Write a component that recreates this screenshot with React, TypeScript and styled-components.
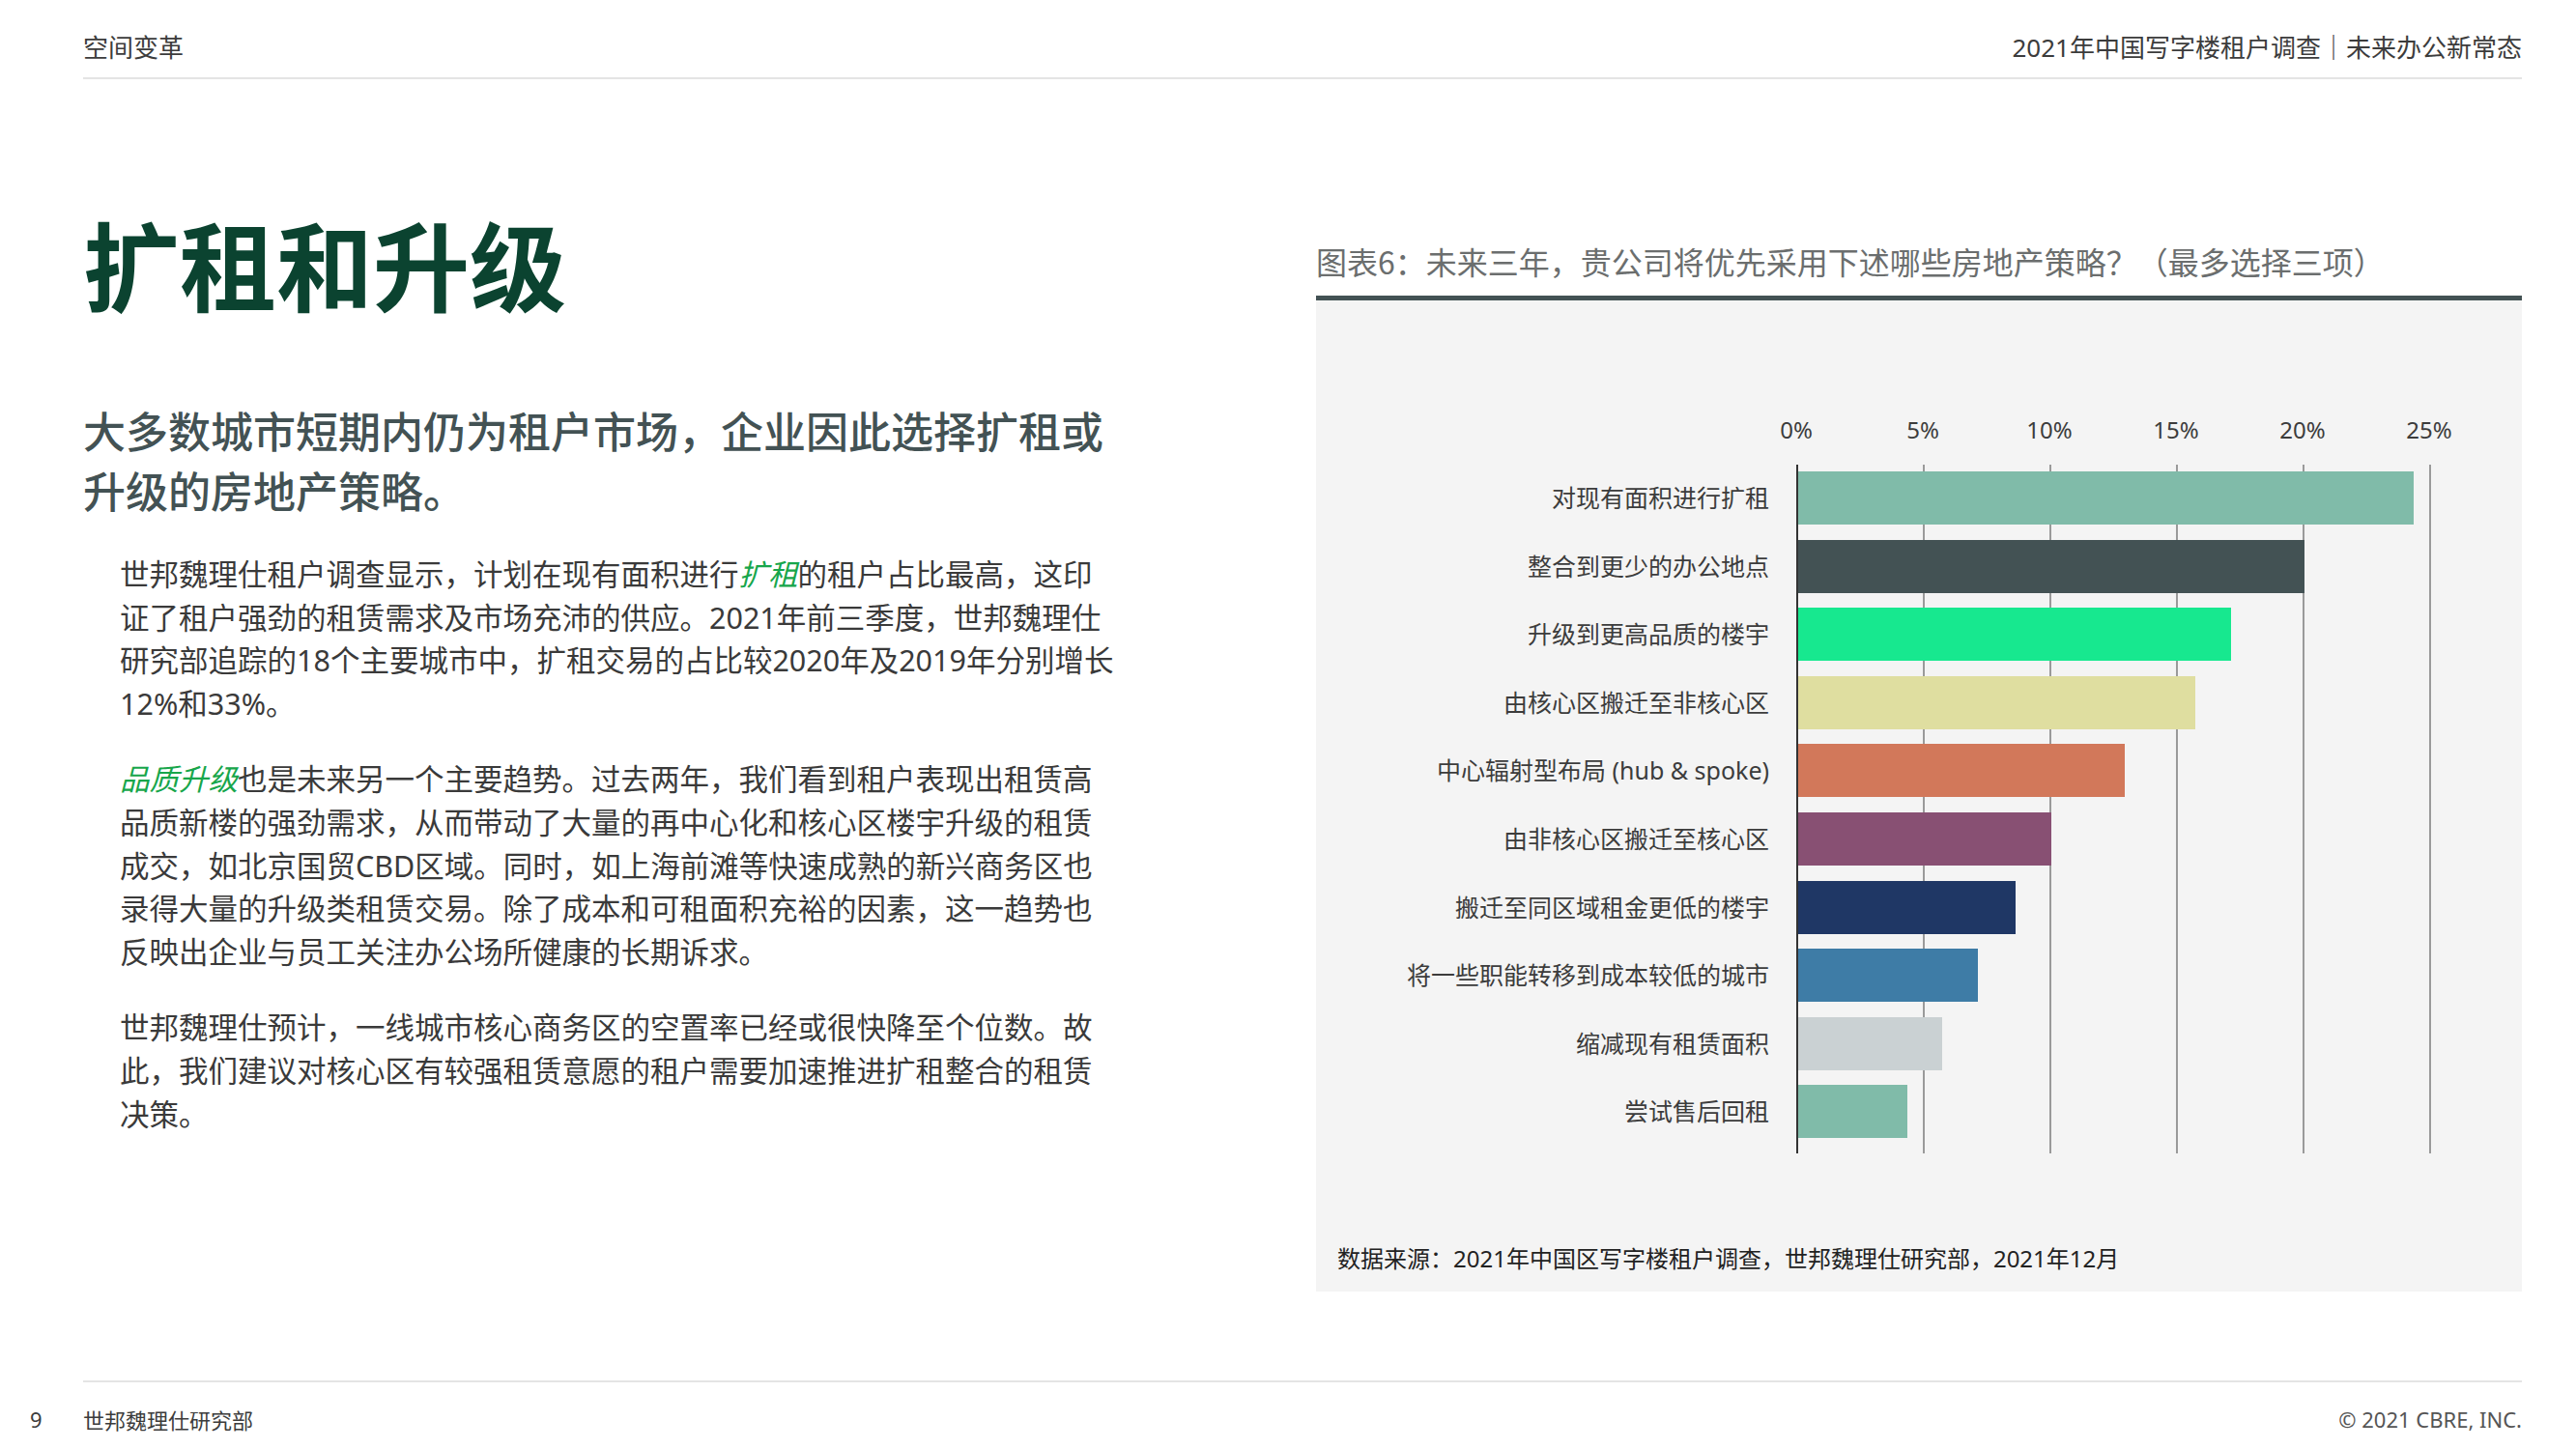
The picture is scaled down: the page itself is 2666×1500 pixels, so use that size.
import styled, { createGlobalStyle } from 'styled-components';

const Global = createGlobalStyle`
	html, body {
		margin: 0;
		background: #ffffff;
		overflow: hidden;
		font-family: "Noto Sans", "Noto Sans CJK SC", sans-serif;
	}
`;

const Page = styled.div`
	width: 2666px;
	height: 1500px;
	overflow: hidden;
	display: flex;
	flex-direction: column;
	box-sizing: border-box;
	padding: 0 56px 0 86px;
	color: #3c3c3c;
`;

const Header = styled.div`
	height: 82px;
	flex: none;
	box-sizing: border-box;
	border-bottom: 2px solid #e4e4e4;
	display: flex;
	justify-content: space-between;
	align-items: flex-end;
	padding-bottom: 16px;
	font-size: 26px;
	line-height: 30px;
	color: #3c3c3c;
`;

const Main = styled.div`
	flex: 1;
	display: flex;
	justify-content: space-between;
`;

const LeftCol = styled.div`
	width: 1110px;
	padding-top: 140px;
`;

const Title = styled.h1`
	margin: 0;
	font-family: "Noto Sans CJK SC", sans-serif;
	font-size: 100px;
	line-height: 100px;
	font-weight: 700;
	color: #0b4330;
`;

const Subtitle = styled.h2`
	margin: 92px 0 0;
	font-family: "Noto Sans CJK SC", sans-serif;
	font-size: 44px;
	line-height: 62px;
	font-weight: 500;
	color: #435254;
`;

const Body = styled.div`
	padding-left: 38px;
	margin-top: 34px;
	width: 1030px;
	display: flex;
	flex-direction: column;
	gap: 34px;
`;

const Para = styled.p`
	margin: 0;
	font-size: 30.5px;
	line-height: 44.6px;
	color: #3a3a3a;
	font-family: "Noto Sans", "Noto Sans CJK SC", sans-serif;
`;

const Hl = styled.em`
	color: #17a64b;
	font-style: italic;
`;

const RightCol = styled.div`
	width: 1248px;
	padding-top: 166px;
	display: flex;
	flex-direction: column;
`;

const ChartTitle = styled.div`
	font-family: "Noto Sans CJK SC", sans-serif;
	font-size: 32px;
	line-height: 44px;
	color: #6b6e6e;
	padding-bottom: 14px;
	border-bottom: 5px solid #435254;
`;

const Panel = styled.div`
	background: #f4f4f4;
	height: 1026px;
	box-sizing: border-box;
	padding: 116px 0 0 22px;
	display: flex;
	flex-direction: column;
`;

const Axis = styled.div`
	margin-left: 475px;
	height: 36px;
	position: relative;
`;

const Tick = styled.span<{ $x: number }>`
	position: absolute;
	left: ${p => p.$x}px;
	transform: translateX(-50%);
	font-size: 24px;
	line-height: 36px;
	color: #3c3c3c;
`;

const Chart = styled.div`
	margin-top: 18px;
	display: flex;
	height: 713px;
`;

const Labels = styled.div`
	width: 447px;
	display: flex;
	flex-direction: column;
	padding-top: 7px;
`;

const Label = styled.div`
	height: 71.8px;
	line-height: 55px;
	text-align: right;
	font-size: 25px;
	color: #3c3c3c;
	white-space: nowrap;
`;

const Plot = styled.div`
	margin-left: 28px;
	position: relative;
	width: 680px;
	border-left: 2px solid #333;
	display: flex;
	flex-direction: column;
	padding-top: 7px;
`;

const Grid = styled.div<{ $x: number }>`
	position: absolute;
	top: 0;
	bottom: 0;
	left: ${p => p.$x}px;
	width: 2px;
	background: #9a9a9a;
`;

const BarRow = styled.div`
	height: 71.8px;
	position: relative;
	z-index: 1;
`;

const Bar = styled.div<{ $c: string }>`
	height: 55px;
	background: ${p => p.$c};
`;

const Source = styled.div`
	margin-top: auto;
	margin-bottom: 18px;
	font-size: 24px;
	color: #222;
`;

const Footer = styled.div`
	flex: none;
	height: 71px;
	box-sizing: border-box;
	border-top: 2px solid #e4e4e4;
	display: flex;
	align-items: center;
	padding-top: 6px;
	font-size: 22px;
	color: #3c3c3c;
`;

const PageNo = styled.span`
	margin-left: -55px;
	width: 55px;
`;

const Copy = styled.span`
	margin-left: auto;
	color: #555;
`;

const PX = 131;
const rows: [string, number, string][] = [
	['对现有面积进行扩租', 24.3, '#80bba9'],
	['整合到更少的办公地点', 20, '#435254'],
	['升级到更高品质的楼宇', 17.1, '#17e88f'],
	['由核心区搬迁至非核心区', 15.7, '#dfdea0'],
	['中心辐射型布局 (hub & spoke)', 12.9, '#d2785a'],
	['由非核心区搬迁至核心区', 10, '#885073'],
	['搬迁至同区域租金更低的楼宇', 8.6, '#1f3765'],
	['将一些职能转移到成本较低的城市', 7.1, '#3e7ca6'],
	['缩减现有租赁面积', 5.7, '#cad1d3'],
	['尝试售后回租', 4.3, '#80bba9'],
];

export default function App() {
	return (
		<Page>
			<Global />
			<Header>
				<span>空间变革</span>
				<span>2021年中国写字楼租户调查｜未来办公新常态</span>
			</Header>
			<Main>
				<LeftCol>
					<Title>扩租和升级</Title>
					<Subtitle>大多数城市短期内仍为租户市场，企业因此选择扩租或<br />升级的房地产策略。</Subtitle>
					<Body>
						<Para>世邦魏理仕租户调查显示，计划在现有面积进行<Hl>扩租</Hl>的租户占比最高，这印证了租户强劲的租赁需求及市场充沛的供应。2021年前三季度，世邦魏理仕研究部追踪的18个主要城市中，扩租交易的占比较2020年及2019年分别增长12%和33%。</Para>
						<Para><Hl>品质升级</Hl>也是未来另一个主要趋势。过去两年，我们看到租户表现出租赁高品质新楼的强劲需求，从而带动了大量的再中心化和核心区楼宇升级的租赁成交，如北京国贸CBD区域。同时，如上海前滩等快速成熟的新兴商务区也录得大量的升级类租赁交易。除了成本和可租面积充裕的因素，这一趋势也反映出企业与员工关注办公场所健康的长期诉求。</Para>
						<Para>世邦魏理仕预计，一线城市核心商务区的空置率已经或很快降至个位数。故此，我们建议对核心区有较强租赁意愿的租户需要加速推进扩租整合的租赁决策。</Para>
					</Body>
				</LeftCol>
				<RightCol>
					<ChartTitle>图表6：未来三年，贵公司将优先采用下述哪些房地产策略？（最多选择三项）</ChartTitle>
					<Panel>
						<Axis>
							{[0, 5, 10, 15, 20, 25].map((t, i) => (
								<Tick key={t} $x={i * PX}>{t}%</Tick>
							))}
						</Axis>
						<Chart>
							<Labels>
								{rows.map(r => <Label key={r[0]}>{r[0]}</Label>)}
							</Labels>
							<Plot>
								{[1, 2, 3, 4, 5].map(i => <Grid key={i} $x={i * PX - 2} />)}
								{rows.map(r => (
									<BarRow key={r[0]}>
										<Bar $c={r[2]} style={{ width: (r[1] / 5) * PX }} />
									</BarRow>
								))}
							</Plot>
						</Chart>
						<Source>数据来源：2021年中国区写字楼租户调查，世邦魏理仕研究部，2021年12月</Source>
					</Panel>
				</RightCol>
			</Main>
			<Footer>
				<PageNo>9</PageNo>
				<span>世邦魏理仕研究部</span>
				<Copy>© 2021 CBRE, INC.</Copy>
			</Footer>
		</Page>
	);
}
